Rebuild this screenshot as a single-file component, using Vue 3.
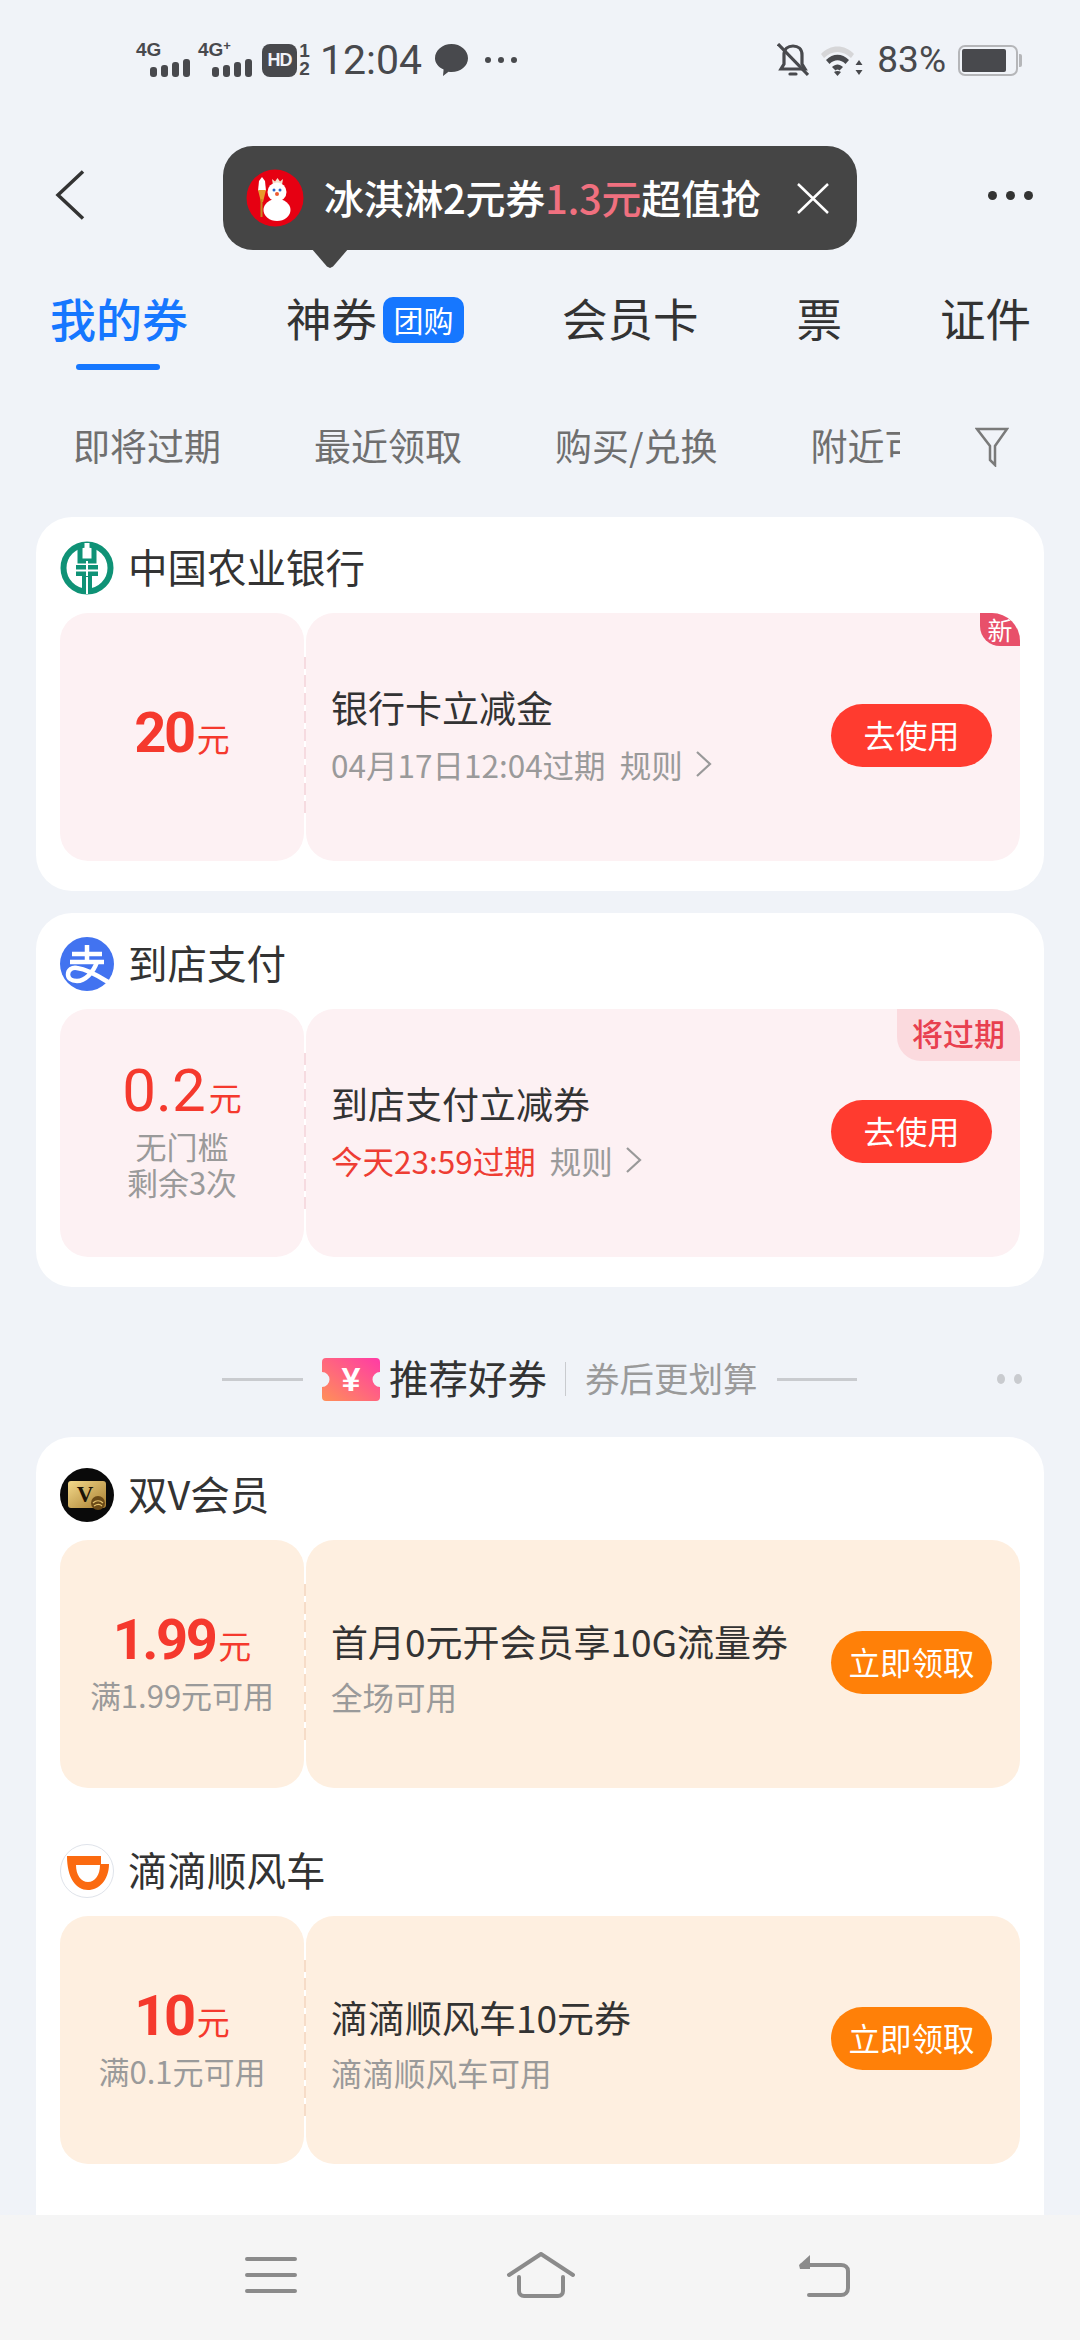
<script setup>
const cards = [
  {
    logo: 'abc',
    name: '中国农业银行',
    tone: 'pink',
    num: '20',
    numClass: 'bold',
    title: '银行卡立减金',
    sub: '04月17日12:04过期',
    rule: true,
    btn: '去使用',
    tag: 'new'
  },
  {
    logo: 'ali',
    name: '到店支付',
    tone: 'pink',
    num: '0.2',
    numClass: 'thin',
    notes: ['无门槛', '剩余3次'],
    title: '到店支付立减券',
    sub: '今天23:59过期',
    subRed: true,
    rule: true,
    btn: '去使用',
    tag: 'soon'
  }
]

const recommended = [
  {
    logo: 'vip',
    name: '双V会员',
    tone: 'orange',
    num: '1.99',
    numClass: 'bold',
    notes: ['满1.99元可用'],
    title: '首月0元开会员享10G流量券',
    sub: '全场可用',
    btn: '立即领取'
  },
  {
    logo: 'didi',
    name: '滴滴顺风车',
    tone: 'orange',
    num: '10',
    numClass: 'bold',
    notes: ['满0.1元可用'],
    title: '滴滴顺风车10元券',
    sub: '滴滴顺风车可用',
    btn: '立即领取'
  }
]

const filters = ['即将过期', '最近领取', '购买/兑换', '附近可用']
</script>

<template>
  <div class="page">
    <div class="content">
      <div class="status">
        <div class="net">
          <span class="net-label">4G</span>
          <svg class="bars" width="40" height="18" viewBox="0 0 40 18"><rect x="0" y="8" width="7" height="10" rx="3" /><rect x="11" y="6" width="7" height="12" rx="3" /><rect x="22" y="3" width="7" height="15" rx="3" /><rect x="33" y="0" width="7" height="18" rx="3" /></svg>
        </div>
        <div class="net net2">
          <span class="net-label">4G<sup>+</sup></span>
          <svg class="bars" width="40" height="18" viewBox="0 0 40 18"><rect x="0" y="8" width="7" height="10" rx="3" /><rect x="11" y="6" width="7" height="12" rx="3" /><rect x="22" y="3" width="7" height="15" rx="3" /><rect x="33" y="0" width="7" height="18" rx="3" /></svg>
        </div>
        <span class="hd">HD</span>
        <span class="sim"><i>1</i><i>2</i></span>
        <span class="time">12:04</span>
        <svg class="msg" width="33" height="32" viewBox="0 0 33 32"><path d="M16.5 0C25.6 0 33 6.4 33 14.2 33 22 25.6 28 16.5 28c-1 0-2 0-3-.2L8 32l.6-6.500C3.400 23.200 0 19 0 14.200 0 6.400 7.400 0 16.500 0Z" fill="#48494d" /></svg>
        <span class="status-dots"><i></i><i></i><i></i></span>
        <span class="grow"></span>
        <svg width="32" height="34" viewBox="0 0 32 34" fill="none" stroke="#48494d" stroke-width="3.200"><path d="M7 12c0-6 4-9 9-9s9 3 9 9v9l3 5H4l3-5Z" /><path d="M1 1l30 31" /><path d="M13 31h6" stroke-linecap="round" /></svg>
        <svg class="wifi" width="42" height="32" viewBox="0 0 42 32"><path d="M0 10C9 0 24 0 33 10l-3 4C22 6 11 6 3 14Z" fill="#d6d6d8" /><path d="M5 16c7-7 16-7 23 0l-3.500 4c-5-5-11-5-16 0Z" fill="#48494d" /><path d="M11 23c3.500-3.500 7.500-3.500 11 0l-3.500 3.500c-1.500-1.200-2.500-1.200-4 0Z" fill="#48494d" /><path d="M16.500 32l-3.500-4c2-1.500 5-1.500 7 0Z" fill="#48494d" /><path d="M38 16l3.500 5h-7Z M38 31l-3.500-5h7Z" fill="#48494d" /></svg>
        <span class="batt-text">83%</span>
        <div class="batt"><div class="batt-fill"></div></div>
        <span class="batt-tip"></span>
      </div>

      <div class="topbar">
        <svg width="30" height="50" viewBox="0 0 30 50" fill="none" stroke="#333" stroke-width="3.500"><path d="M28 1.500 3 25l25 23.500" /></svg>
        <span class="more"><i></i><i></i><i></i></span>
      </div>

      <div class="tabs">
        <div class="tab active"><span class="tab-text">我的券</span><span class="tab-line"></span></div>
        <div class="tab"><span class="tab-text">神券</span><span class="tab-badge">团购</span></div>
        <div class="tab"><span class="tab-text">会员卡</span></div>
        <div class="tab"><span class="tab-text">票</span></div>
        <div class="tab"><span class="tab-text">证件</span></div>
      </div>

      <div class="filters">
        <div class="filter-clip">
          <span v-for="f in filters" :key="f" class="filter">{{ f }}</span>
        </div>
        <svg class="filter-icon" width="34" height="40" viewBox="0 0 34 40" fill="none" stroke="#7a7a7a" stroke-width="2.500"><path d="M2 2h30L20 19v19l-5-5V19Z" /></svg>
      </div>

      <div v-for="s in cards" :key="s.name" class="card">
        <div class="brand">
          <svg v-if="s.logo === 'abc'" width="54" height="54" viewBox="0 0 54 54" fill="none">
            <circle cx="27" cy="27" r="23.500" stroke="#0f9276" stroke-width="6" />
            <path d="M20 3v17h14V3" stroke="#0f9276" stroke-width="5" />
            <rect x="24.500" y="2" width="5" height="14" fill="#fff" />
            <path d="M16 24h22v11H16Z" fill="#0f9276" />
            <path d="M16 29.500h22M27 20v33" stroke="#fff" stroke-width="2" />
            <path d="M22 35h10v16H22Z" fill="#0f9276" />
            <path d="M27 36v15" stroke="#fff" stroke-width="2" />
          </svg>
          <svg v-else width="54" height="54" viewBox="0 0 54 54" fill="none">
            <circle cx="27" cy="27" r="27" fill="#4273f0" />
            <path d="M12 17h30M27 8v17M10 25h34" stroke="#fff" stroke-width="4.500" />
            <path d="M37 25c-4 11-12 19-20 19-6 0-9-3-9-6.500C8 33 12 30 17 31c8 1 20 7 31 14" stroke="#fff" stroke-width="4.500" />
          </svg>
          <span class="brand-name">{{ s.name }}</span>
        </div>
        <div class="coupon" :class="s.tone">
          <div class="stub">
            <div class="amount"><span class="num" :class="s.numClass">{{ s.num }}</span><span class="unit">元</span></div>
            <div v-for="n in s.notes" :key="n" class="note">{{ n }}</div>
          </div>
          <div class="tear"></div>
          <div class="body">
            <div class="info">
              <div class="title">{{ s.title }}</div>
              <div class="sub">
                <span :class="{ red: s.subRed }">{{ s.sub }}</span>
                <span class="rule">规则</span>
                <svg class="rule-arrow" width="17" height="28" viewBox="0 0 17 28" fill="none" stroke="#999" stroke-width="2.200"><path d="M2 2l13 12L2 26" /></svg>
              </div>
            </div>
            <div class="btn" :class="s.tone">{{ s.btn }}</div>
            <span v-if="s.tag === 'new'" class="tag-new">新</span>
            <span v-if="s.tag === 'soon'" class="tag-soon">将过期</span>
          </div>
        </div>
      </div>

      <div class="rec-head">
        <span class="rec-line"></span>
        <svg class="ticket" width="58" height="43" viewBox="0 0 58 43">
          <defs>
            <linearGradient id="tk" x1="0" y1="1" x2="1" y2="0">
              <stop offset="0" stop-color="#ff9058" />
              <stop offset="1" stop-color="#ff3aa6" />
            </linearGradient>
          </defs>
          <path d="M4 0h50a4 4 0 0 1 4 4v10a7.500 7.500 0 0 0 0 15v10a4 4 0 0 1-4 4H4a4 4 0 0 1-4-4V29a7.500 7.500 0 0 0 0-15V4a4 4 0 0 1 4-4Z" fill="url(#tk)" />
          <text x="29" y="33" text-anchor="middle" class="ticket-yen">¥</text>
        </svg>
        <span class="rec-title">推荐好券</span>
        <span class="rec-div"></span>
        <span class="rec-sub">券后更划算</span>
        <span class="rec-line right"></span>
        <span class="rec-dots"><i></i><i></i></span>
      </div>

      <div class="card rec-card">
        <div v-for="s in recommended" :key="s.name" class="section">
          <div class="brand">
            <svg v-if="s.logo === 'vip'" width="54" height="54" viewBox="0 0 54 54">
              <defs>
                <linearGradient id="gold" x1="0" y1="0" x2="1" y2="1">
                  <stop offset="0" stop-color="#f3d98a" />
                  <stop offset="1" stop-color="#a97f32" />
                </linearGradient>
              </defs>
              <circle cx="27" cy="27" r="27" fill="#0a0a0a" />
              <rect x="8" y="13" width="38" height="27" rx="3" fill="url(#gold)" />
              <text x="25" y="34" text-anchor="middle" class="vip-v">V</text>
              <circle cx="38" cy="35" r="7" fill="#6b4a17" />
              <path d="M33 35c3-3 7-3 10 0M34 38c3-2 6-2 8 0" stroke="#e6c46e" stroke-width="1.200" fill="none" />
            </svg>
            <svg v-else width="54" height="54" viewBox="0 0 54 54">
              <circle cx="27" cy="27" r="26.500" fill="#fff" stroke="#dfe3ea" stroke-width="1" />
              <path fill-rule="evenodd" fill="#fb6a10" d="M7 12h34v8h8c0 16-10 26-21 26C16 46 7 34 7 12Zm9 9h24c0 10-5 17-12 17-7 0-12-7-12-17Z" />
            </svg>
            <span class="brand-name">{{ s.name }}</span>
          </div>
          <div class="coupon" :class="s.tone">
            <div class="stub">
              <div class="amount"><span class="num" :class="s.numClass">{{ s.num }}</span><span class="unit">元</span></div>
              <div v-for="n in s.notes" :key="n" class="note">{{ n }}</div>
            </div>
            <div class="tear"></div>
            <div class="body">
              <div class="info">
                <div class="title">{{ s.title }}</div>
                <div class="sub">{{ s.sub }}</div>
              </div>
              <div class="btn" :class="s.tone">{{ s.btn }}</div>
            </div>
          </div>
        </div>
      </div>
    </div>

    <div class="navbar">
      <svg width="52" height="38" viewBox="0 0 52 38" stroke="#8b8b8b" stroke-width="4" stroke-linecap="round"><path d="M2 3h48M2 19h48M2 35h48" /></svg>
      <svg class="nav-home" width="72" height="46" viewBox="0 0 72 46" fill="none" stroke="#8b8b8b" stroke-width="4" stroke-linecap="round" stroke-linejoin="round"><path d="M3 23 35 2l32 21" /><path d="M13 25v14c0 3 2 5 5 5h34c3 0 5-2 5-5V25" /></svg>
      <svg width="54" height="44" viewBox="0 0 54 44" fill="none" stroke="#8b8b8b" stroke-width="4" stroke-linecap="round" stroke-linejoin="round"><path d="M5 12h39c4 0 7 2 7 6v17c0 4-3 7-7 7H12" /><path d="M13 2 2 12l1 4h10Z" fill="#8b8b8b" stroke="none" /></svg>
    </div>

    <div class="bubble">
      <svg width="58" height="58" viewBox="0 0 58 58">
        <circle cx="29" cy="29" r="28.500" fill="#e60012" />
        <path d="M13 12l3-4 3 4 1 10h-8Z" fill="#fff" />
        <path d="M12 21h8l-3 12h-2Z" fill="#e89a2c" />
        <path d="M15.500 30v18" stroke="#c9861f" stroke-width="2" />
        <path d="M26 10l3 2.500L31.500 9l2.500 3.500L37 10l-1 6H27Z" fill="#f3e3d0" />
        <circle cx="31" cy="23" r="9.500" fill="#fff" />
        <circle cx="28" cy="21" r="1.500" fill="#2c66c8" />
        <circle cx="34" cy="21" r="1.500" fill="#2c66c8" />
        <circle cx="31" cy="25" r="2" fill="#ee5a30" />
        <ellipse cx="31" cy="41" rx="13.500" ry="11" fill="#fff" />
      </svg>
      <span class="bubble-text">冰淇淋2元券<em>1.3元</em>超值抢</span>
      <svg class="bubble-close" width="34" height="33" viewBox="0 0 34 33" stroke="#fff" stroke-width="2.500"><path d="M2 2l30 29M32 2 2 31" /></svg>
    </div>
  </div>
</template>

<style scoped>
.page {
  position: relative;
  width: 1080px;
  height: 2340px;
  display: flex;
  flex-direction: column;
  overflow: hidden;
  background: #f0f3f8;
  font-family: "Noto Sans CJK SC", "Noto Sans", sans-serif;
  color: #333;
}
.content {
  flex: 1;
  min-height: 0;
  overflow: hidden;
}

/* status bar */
.status {
  height: 120px;
  box-sizing: border-box;
  padding: 0 58px 0 136px;
  display: flex;
  align-items: center;
  color: #48494d;
}
.net {
  width: 54px;
  height: 36px;
  display: flex;
  flex-direction: column;
  align-items: flex-end;
  position: relative;
  margin-top: -2px;
}
.net2 {
  margin-left: 8px;
}
.net-label {
  position: absolute;
  left: 0;
  top: -1px;
  font: bold 19px/20px "Liberation Sans", sans-serif;
  white-space: nowrap;
}
.net-label sup {
  font-size: 13px;
  line-height: 0;
  vertical-align: 6px;
}
.bars {
  margin-top: auto;
  fill: #48494d;
}
.hd {
  margin-left: 10px;
  width: 35px;
  height: 33px;
  border-radius: 8px;
  background: #48494d;
  color: #f0f3f8;
  font: bold 18px/33px "Liberation Sans", sans-serif;
  text-align: center;
  letter-spacing: -1px;
}
.sim {
  width: 11px;
  margin-left: 2px;
  display: flex;
  flex-direction: column;
}
.sim i {
  font: bold 19px/18px "Liberation Sans", sans-serif;
  text-align: center;
}
.time {
  margin-left: 10px;
  font: 400 41px/48px Roboto, sans-serif;
  color: #48494d;
}
.msg {
  margin-left: 13px;
}
.status-dots {
  margin-left: 17px;
  display: flex;
  gap: 7px;
}
.status-dots i {
  width: 6px;
  height: 6px;
  border-radius: 50%;
  background: #48494d;
}
.grow {
  flex: 1;
}
.wifi {
  margin-left: 12px;
}
.batt-text {
  margin-left: 14px;
  font: 400 37px/44px Roboto, sans-serif;
  color: #48494d;
}
.batt {
  margin-left: 12px;
  width: 60px;
  height: 31px;
  box-sizing: border-box;
  border: 2.500px solid #b5b6b9;
  border-radius: 7px;
  padding: 2px;
}
.batt-fill {
  width: 84%;
  height: 100%;
  background: #48494d;
  border-radius: 2px;
}
.batt-tip {
  width: 3px;
  height: 13px;
  margin-left: 1px;
  background: #b5b6b9;
  border-radius: 0 2px 2px 0;
}

/* title row */
.topbar {
  height: 150px;
  box-sizing: border-box;
  padding: 0 47px 0 55px;
  display: flex;
  align-items: center;
  justify-content: space-between;
}
.more {
  display: flex;
  gap: 9px;
}
.more i {
  width: 9px;
  height: 9px;
  border-radius: 50%;
  background: #333;
}

/* tabs */
.tabs {
  height: 100px;
  padding-left: 50px;
  display: flex;
  align-items: center;
  gap: 98px;
}
.tab {
  position: relative;
  display: flex;
  align-items: center;
  font-size: 45.500px;
  line-height: 60px;
  white-space: nowrap;
}
.tab-text {
  padding-bottom: 6px;
}
.tab.active {
  color: #1677ff;
  font-size: 46px;
  font-weight: 500;
}
.tab-line {
  position: absolute;
  left: 26px;
  width: 84px;
  bottom: -17px;
  height: 6px;
  border-radius: 3px;
  background: #1677ff;
}
.tab-badge {
  margin-left: 6px;
  width: 81px;
  height: 46px;
  border-radius: 10px;
  background: #1677ff;
  color: #fff;
  font-size: 30px;
  line-height: 44px;
  text-align: center;
}

/* filter row */
.filters {
  height: 58px;
  padding: 46px 0 43px 73px;
  display: flex;
  align-items: center;
}
.filter-clip {
  width: 827px;
  flex: none;
  overflow: hidden;
  display: flex;
  gap: 93px;
}
.filter {
  flex: none;
  font-size: 37px;
  line-height: 50px;
  color: #6f6f6f;
}
.filter-icon {
  margin-left: 75px;
  margin-top: 4px;
}

/* cards */
.card {
  margin: 0 36px 22px;
  padding: 24px 24px 30px;
  border-radius: 36px;
  background: #fff;
}
.rec-card {
  padding-top: 31px;
  margin-bottom: 0;
  display: flex;
  flex-direction: column;
  gap: 56px;
  padding-bottom: 120px;
}
.brand {
  height: 54px;
  margin-bottom: 18px;
  display: flex;
  align-items: center;
}
.brand-name {
  margin-left: 14px;
  padding-bottom: 5px;
  font-size: 39.500px;
  line-height: 54px;
  white-space: nowrap;
}

/* coupon */
.coupon {
  height: 248px;
  display: flex;
}
.stub {
  width: 244px;
  flex: none;
  box-sizing: border-box;
  padding-bottom: 8px;
  display: flex;
  flex-direction: column;
  align-items: center;
  justify-content: center;
  border-radius: 28px;
  overflow: hidden;
}
.tear {
  width: 2px;
  flex: none;
  background-image: repeating-linear-gradient(to bottom, var(--tear) 0 12px, #fff 12px 18px);
  background-size: 2px 160px;
  background-position: 0 44px;
  background-repeat: no-repeat;
  background-color: #fff;
}
.body {
  position: relative;
  flex: 1;
  min-width: 0;
  box-sizing: border-box;
  display: flex;
  align-items: center;
  justify-content: space-between;
  padding: 0 28px 4px 25px;
  border-radius: 28px;
  overflow: hidden;
}
.pink {
  --tear: #f6dbe0;
}
.orange {
  --tear: #f6dcc8;
}
.coupon.pink .stub,
.coupon.pink .body {
  background: #fdf1f3;
}
.coupon.orange .stub,
.coupon.orange .body {
  background: #feefe0;
}
.coupon.orange .info {
  padding-top: 13px;
}
.amount {
  display: flex;
  align-items: baseline;
  color: #f5392d;
  white-space: nowrap;
}
.num {
  font-family: Roboto, "Liberation Sans", sans-serif;
  line-height: 66px;
}
.num.bold {
  font-size: 56px;
  font-weight: 700;
  letter-spacing: -2.500px;
}
.num.thin {
  font-size: 60px;
  font-weight: 400;
}
.unit {
  margin-left: 3px;
  font-size: 33px;
}
.note {
  font-size: 31px;
  line-height: 36px;
  color: #9a9a9a;
  white-space: nowrap;
}
.amount + .note {
  margin-top: 4px;
}
.title {
  font-size: 37px;
  line-height: 50px;
  color: #333;
  white-space: nowrap;
}
.sub {
  margin-top: 7px;
  display: flex;
  align-items: center;
  font-size: 31.500px;
  line-height: 50px;
  color: #9a9a9a;
  white-space: nowrap;
}
.coupon.orange .sub {
  margin-top: 5px;
}
.sub .red {
  color: #ee3d33;
}
.rule {
  margin-left: 14px;
}
.rule-arrow {
  margin-left: 12px;
}
.btn {
  flex: none;
  width: 161px;
  height: 63px;
  border-radius: 32px;
  color: #fff;
  font-size: 32px;
  line-height: 61px;
  text-align: center;
  white-space: nowrap;
}
.btn.pink {
  background: #ff3b2f;
}
.btn.orange {
  background: #ff8008;
  font-size: 31.500px;
}
.tag-new {
  position: absolute;
  right: 0;
  top: 0;
  width: 40px;
  height: 33px;
  background: #e8506a;
  border-radius: 0 0 0 20px;
  color: #fff;
  font-size: 25px;
  line-height: 33px;
  text-align: center;
}
.tag-soon {
  position: absolute;
  right: 0;
  top: 0;
  width: 123px;
  height: 52px;
  background: #fbdade;
  border-radius: 0 0 0 24px;
  color: #e8404f;
  font-size: 31px;
  font-weight: 500;
  line-height: 48px;
  text-align: center;
}

/* recommended header */
.rec-head {
  position: relative;
  height: 150px;
  box-sizing: border-box;
  margin-top: -22px;
  padding: 34px 0 0 222px;
  display: flex;
  align-items: center;
}
.rec-line {
  width: 81px;
  height: 3px;
  background: #c9cbcf;
}
.rec-line.right {
  margin-left: 19px;
  width: 80px;
}
.ticket {
  margin-left: 19px;
}
.ticket-yen {
  font: bold 34px "Liberation Sans", sans-serif;
  fill: #fff;
}
.rec-title {
  margin-left: 9px;
  padding-bottom: 6px;
  font-size: 39.500px;
  white-space: nowrap;
}
.rec-div {
  margin-left: 18px;
  width: 1px;
  height: 34px;
  background: #c9cbcf;
}
.rec-sub {
  margin-left: 19px;
  padding-bottom: 5px;
  font-size: 34.500px;
  color: #9a9a9a;
  white-space: nowrap;
}
.rec-dots {
  position: absolute;
  left: 997px;
  top: 87px;
  display: flex;
  gap: 9px;
}
.rec-dots i {
  width: 8px;
  height: 10px;
  border-radius: 50%;
  background: #c9cbcf;
}
.vip-v {
  font: bold 23px "Liberation Serif", serif;
  fill: #1c1306;
}

/* bottom nav */
.navbar {
  flex: none;
  height: 125px;
  position: relative;
  background: #f5f5f5;
  box-sizing: border-box;
  padding: 0 229px 5px 245px;
  display: flex;
  align-items: center;
  justify-content: space-between;
}
.nav-home {
  margin-right: 10px;
}

/* promo bubble over the title row */
.bubble {
  position: absolute;
  left: 223px;
  top: 146px;
  width: 634px;
  height: 104px;
  box-sizing: border-box;
  padding: 0 27px 0 23px;
  display: flex;
  align-items: center;
  border-radius: 30px;
  background: #454545;
}
.bubble::after {
  content: "";
  position: absolute;
  left: 88px;
  bottom: -18px;
  width: 38px;
  height: 20px;
  background: #454545;
  clip-path: polygon(0 0, 100% 0, 58% 92%, 50% 100%, 42% 92%);
}
.bubble-text {
  margin-left: 20px;
  padding-bottom: 3px;
  flex: 1;
  color: #fff;
  font-size: 40px;
  font-weight: 500;
  letter-spacing: -0.300px;
  white-space: nowrap;
}
.bubble-text em {
  font-style: normal;
  color: #f0707f;
}
</style>
